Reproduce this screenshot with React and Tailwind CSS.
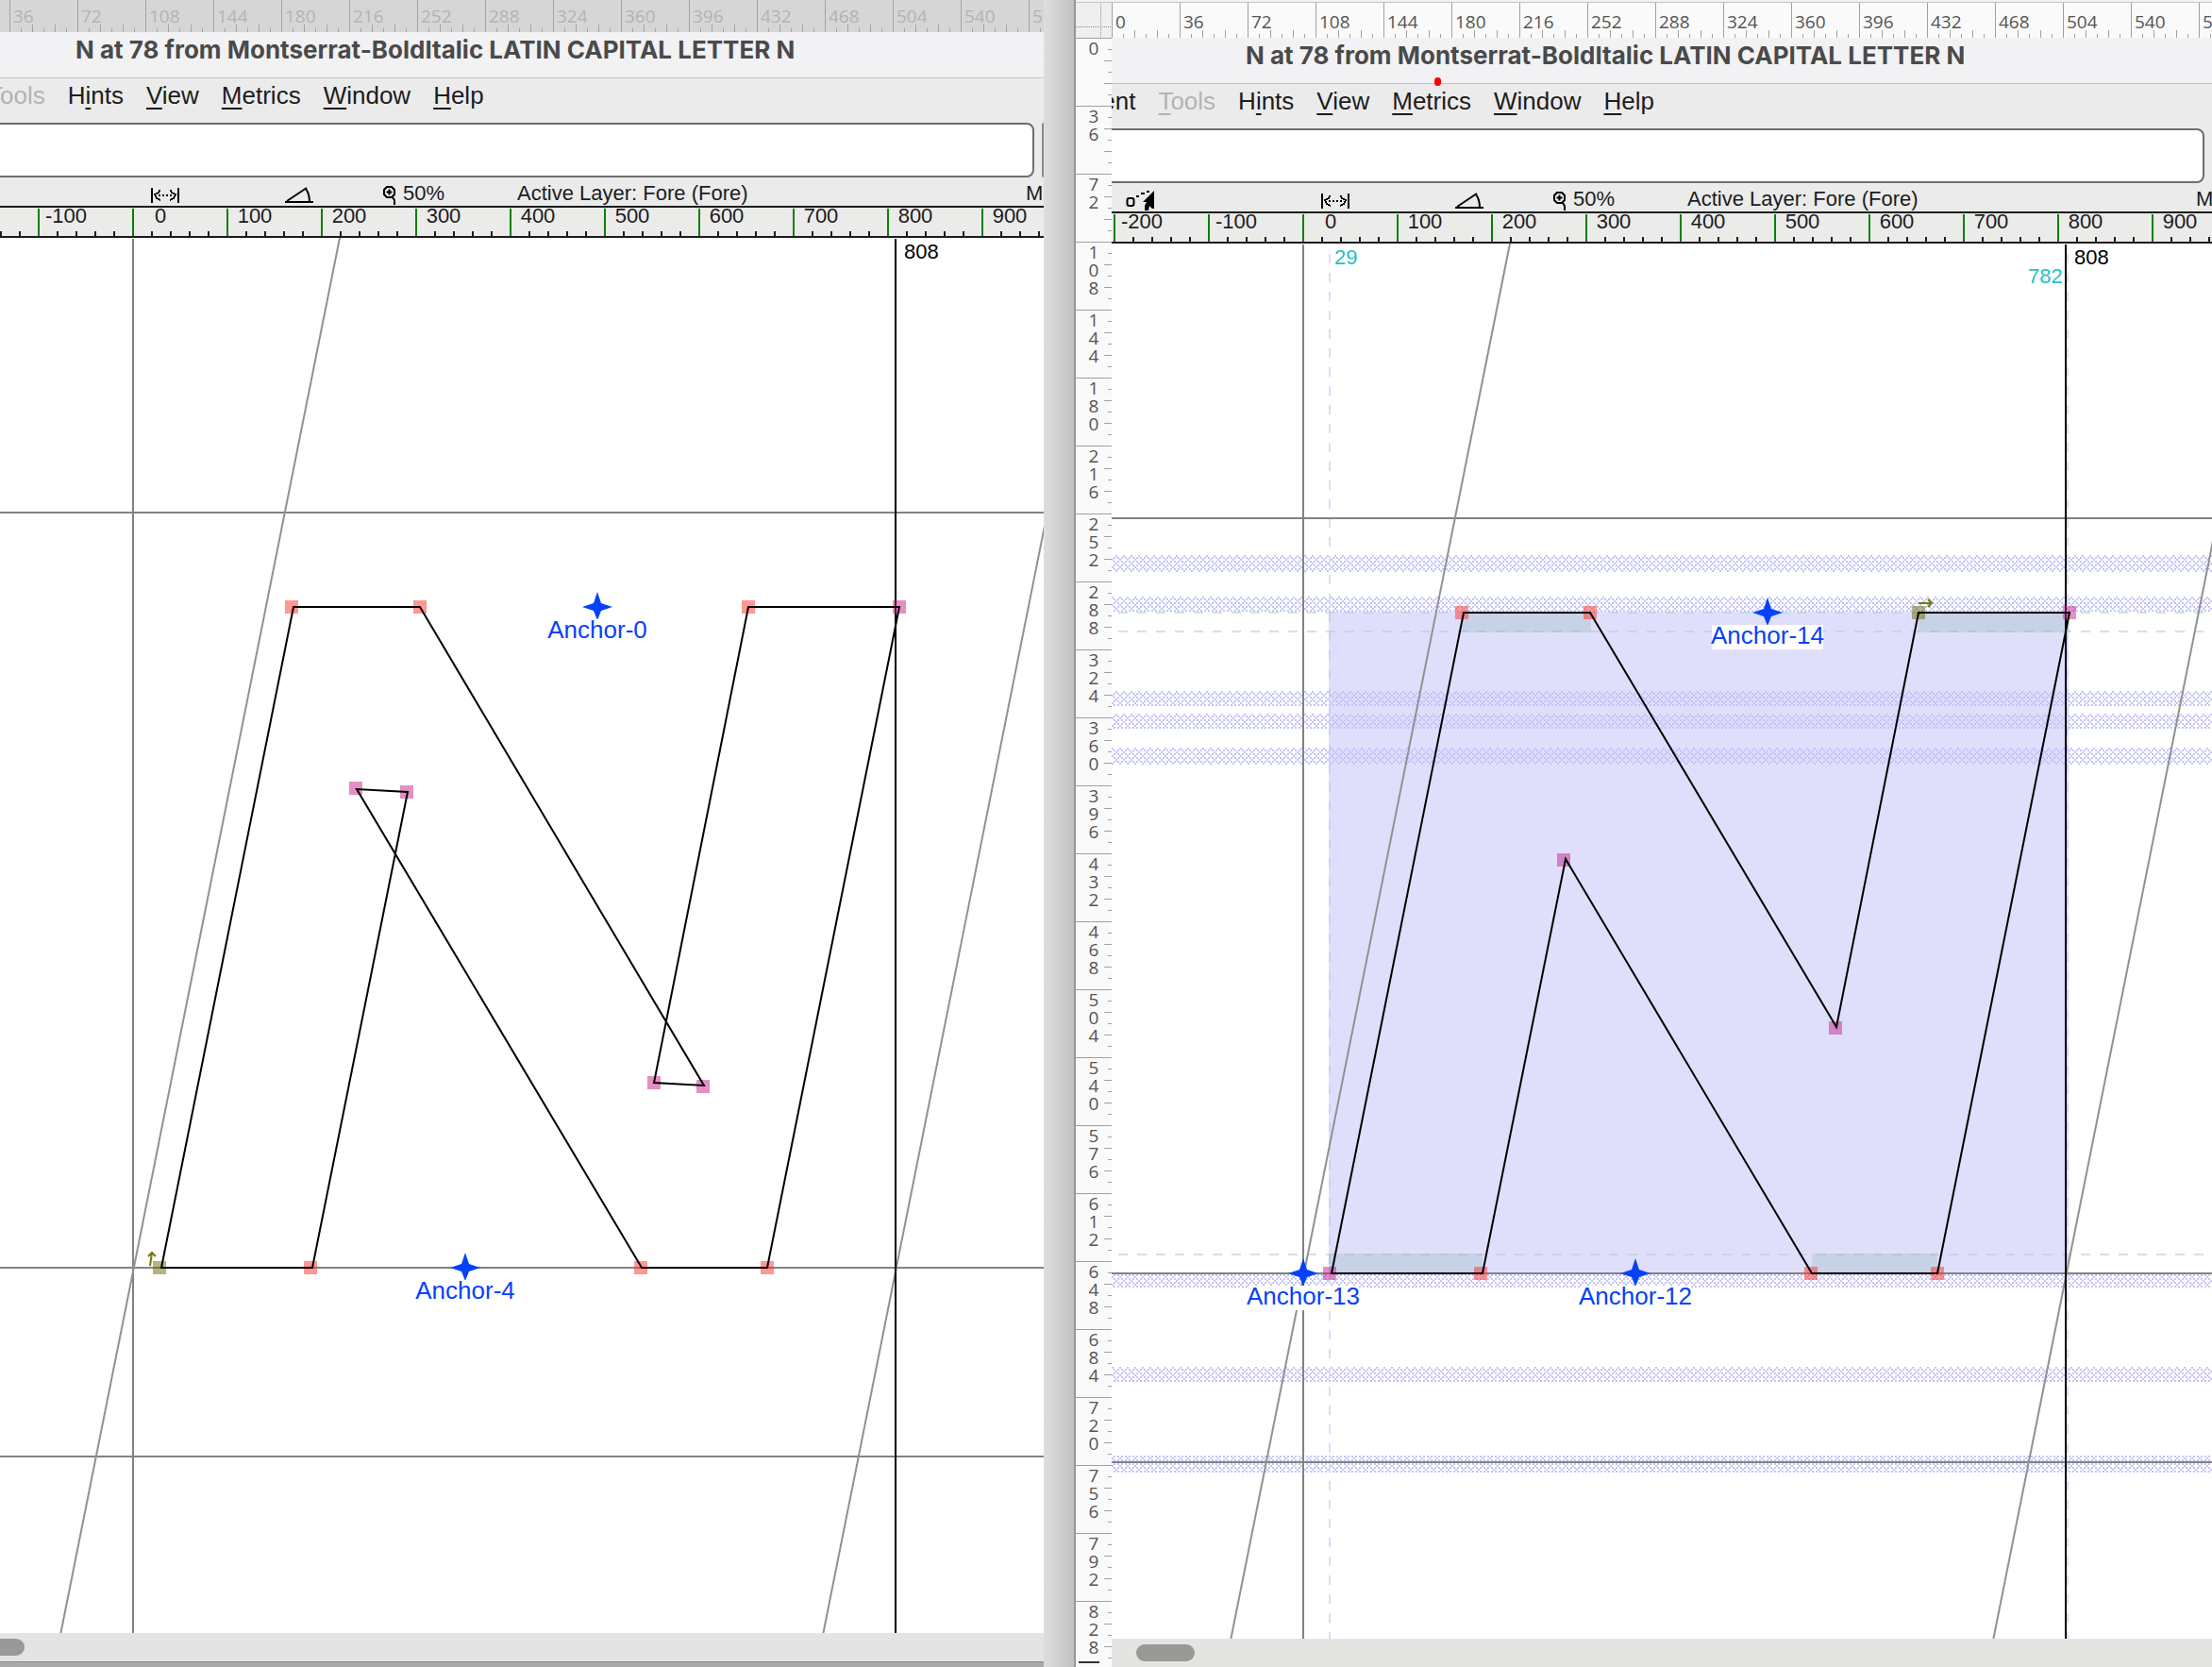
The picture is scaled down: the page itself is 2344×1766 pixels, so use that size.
const POINT_COLORS = {
  corner: 'rgba(255,56,48,0.52)',
  tangent: 'rgba(200,34,140,0.5)',
  first: 'rgba(112,112,12,0.52)',
};

const leftGlyph = {
  contours: ['M233 1091L373 391L507 391L808 898L755 895L855 391L1015 391L875 1091L742 1091L440 584L494 587L393 1091Z'],
  points: [
    [371, 391, 'corner'], [507, 391, 'corner'], [807, 899, 'tangent'], [755, 895, 'tangent'],
    [855, 391, 'corner'], [1015, 391, 'tangent'], [875, 1091, 'corner'], [741, 1091, 'corner'],
    [439, 583, 'tangent'], [493, 587, 'tangent'], [391, 1091, 'corner'], [231, 1091, 'first'],
  ],
  anchors: [[695, 391, 'Anchor-0'], [555, 1091, 'Anchor-4']],
  arrow: 'M221 1089L223 1075M219 1079L223 1075L227 1079',
};

const rightGlyph = {
  contours: ['M233 1091L373 391L507 391L768 830L855 391L1015 391L875 1091L742 1091L481 652L393 1091Z'],
  points: [
    [371, 391, 'corner'], [507, 391, 'corner'], [767, 831, 'tangent'], [855, 391, 'first'],
    [1015, 391, 'tangent'], [875, 1091, 'corner'], [741, 1091, 'corner'], [479, 653, 'tangent'],
    [391, 1091, 'corner'], [231, 1091, 'tangent'],
  ],
  anchors: [[695, 391, 'Anchor-14'], [203, 1091, 'Anchor-13'], [555, 1091, 'Anchor-12']],
  arrow: 'M855 381L869 381M865 377L869 381L865 385',
};

// [y, height] of the blue zones
const blueZones = [[330, 18], [374, 16], [474, 16], [498, 16], [534, 18], [1092, 14], [1190, 16], [1284, 18]];
const stemHints = [
  [371, 390, 137, 22], [855, 390, 160, 22], [230, 1070, 163, 22], [742, 1070, 133, 22],
];

const pointsRuler = [0, 36, 72, 108, 144, 180, 216, 252, 288, 324, 360, 396, 432, 468, 504, 540, 576];
const verticalRuler = [
  '0', '36', '72', '108', '144', '180', '216', '252', '288', '324', '360', '396',
  '432', '468', '504', '540', '576', '612', '648', '684', '720', '756', '792', '828',
];
const unitRuler = [-200, -100, 0, 100, 200, 300, 400, 500, 600, 700, 800, 900];

// label split around the underlined access key
const menus = [
  ['E', 'l', 'ement'],
  ['', 'T', 'ools', true],
  ['H', 'i', 'nts'],
  ['', 'V', 'iew'],
  ['', 'M', 'etrics'],
  ['', 'W', 'indow'],
  ['', 'H', 'elp'],
];

function TopRuler({ className, tick, values }) {
  return (
    <div className={`flex overflow-hidden font-['Open_Sans',sans-serif] text-[19px] ${className}`}>
      {values.map((v, i) => (
        <div key={i} className="relative h-full w-[72px] shrink-0">
          <svg className="absolute bottom-0 left-0 h-full w-full" viewBox="0 0 72 37" preserveAspectRatio="xMinYMax slice" shapeRendering="crispEdges">
            <path d="M0.5 0V37M12.5 33V37M24.5 29V37M36.5 33V37M48.5 29V37M60.5 33V37" stroke={tick} fill="none" />
          </svg>
          <span className="relative pl-1">{v}</span>
        </div>
      ))}
    </div>
  );
}

function VerticalRuler() {
  return (
    <div className="relative flex min-h-0 flex-1 flex-col overflow-hidden bg-[#fafafa] font-['Open_Sans',sans-serif] text-[19px] leading-[19px] text-[#545454]">
      {verticalRuler.map((v) => (
        <div key={v} className="relative h-[72px] shrink-0 border-t border-[#a0a0a0] pt-px text-center">
          {v.split('').map((d, i) => <div key={i}>{d}</div>)}
          <svg className="absolute -top-px right-0" width="8" height="72" shapeRendering="crispEdges">
            <path d="M4 12.5H8M0 24.5H8M4 36.5H8M0 48.5H8M4 60.5H8" stroke="#a0a0a0" fill="none" />
          </svg>
        </div>
      ))}
      <div className="absolute bottom-1 left-[3px] h-0.5 w-[22px] bg-[#333]" />
    </div>
  );
}

function PointerIcon() {
  return (
    <svg width="32" height="24" viewBox="0 0 32 24" fill="none">
      <rect x="1.5" y="9" width="7" height="8" rx="2" stroke="#000" strokeWidth="2" />
      <path d="M11 7h3M16 4h4M22 2h3" stroke="#000" strokeWidth="2" />
      <path d="M30 1L18 13h4l-2 4v5h4l1-5 3 3h2z" fill="#000" />
    </svg>
  );
}

function WidthIcon() {
  return (
    <svg width="32" height="24" viewBox="0 0 32 24" fill="none" stroke="#000" shapeRendering="crispEdges">
      <path d="M1 4v16M29 4v16" strokeWidth="2" />
      <path d="M10 7h-2v2h-2v2h-2v2h2v2h2v2h2M20 7h2v2h2v2h2v2h-2v2h-2v2h-2" strokeWidth="1.5" strokeDasharray="2 1" />
      <path d="M8 12h14" strokeWidth="2" strokeDasharray="2 2" />
    </svg>
  );
}

function AngleIcon() {
  return (
    <svg width="32" height="24" viewBox="0 0 32 24" fill="none" stroke="#000" strokeWidth="2">
      <path d="M0 19h30M2 18L23 4" />
      <path d="M22 5c3 4 4 9 4 14" />
    </svg>
  );
}

function MagnifierIcon() {
  return (
    <svg width="16" height="24" viewBox="0 0 16 24" fill="none" stroke="#000" strokeWidth="2">
      <path d="M5 3h5l3 3v5l-3 3H5l-3-3V6z" />
      <path d="M7.500 5.500v6M4.500 8.500h6" />
      <path d="M11 14l2 3v5" />
    </svg>
  );
}

function UnitRuler({ values }) {
  return (
    <div className="flex h-[34px] shrink-0 overflow-hidden border-y-2 border-[#1c1c1c] bg-[#ebebea] pl-0.5">
      {values.map((v, i) => (
        <div key={i} className="relative h-full w-[100px] shrink-0">
          <svg className="absolute top-0 left-0" width="100" height="30" shapeRendering="crispEdges">
            <path d="M21 25V30M41 25V30M61 25V30M81 25V30" stroke="#1c1c1c" strokeWidth="2" />
            <path d="M1 1V30" stroke="#0a800a" strokeWidth="2" />
          </svg>
          <div className="relative w-[60px] text-center leading-[18px]">{v}</div>
        </div>
      ))}
    </div>
  );
}

function Anchor({ x, y, label, boxWidth }) {
  return (
    <g fill="#0641fa">
      <path d={`M${x} ${y - 16}L${x + 4} ${y - 4}L${x + 16} ${y}L${x + 4} ${y + 4}L${x} ${y + 14}L${x - 4} ${y + 4}L${x - 16} ${y}L${x - 4} ${y - 4}Z`} />
      <rect x={x - boxWidth / 2} y={y + 13} width={boxWidth} height="26" fill="#fff" />
      <text x={x} y={y + 33} textAnchor="middle" className="text-[26px]">{label}</text>
    </g>
  );
}

function GlyphCanvas({ glyph, hinted }) {
  return (
    <svg className="block min-h-0 w-full flex-1 overflow-hidden bg-white">
      <defs>
        <pattern id="stipple" width="8" height="8" patternUnits="userSpaceOnUse">
          <path d="M2 0h2v2h-2zM6 0h2v2h-2zM4 2h2v2h-2zM2 4h2v2h-2zM6 4h2v2h-2zM0 6h2v2h-2z" fill="#c4c4fa" shapeRendering="crispEdges" />
        </pattern>
      </defs>
      {hinted && (
        <g>
          {blueZones.map(([y, h]) => <rect key={y} x="0" y={y} width="100%" height={h} fill="url(#stipple)" />)}
          <path d="M231 11V1478M1013 11V1478" stroke="#dcdcf8" strokeWidth="2" strokeDasharray="10 10" />
          <path d="M7 391H1166M7 411H1166M7 1071H1166" stroke="#cfe6d2" strokeWidth="2" strokeDasharray="10 10" />
          <rect x="230" y="390" width="784" height="700" fill="rgba(191,191,250,0.5)" />
          {stemHints.map(([x, y, w, h]) => <rect key={`${x}-${y}`} x={x} y={y} width={w} height={h} fill="rgba(70,143,106,0.15)" />)}
        </g>
      )}
      <path d="M0 291H1400M0 1091H1400M0 1291H1400M203 1V1478" stroke="#828282" strokeWidth="2" />
      <path d="M422 0L126 1480M1230 0L934 1480" stroke="#919191" strokeWidth="2" />
      <path d="M1011 1V1478" stroke="#000" strokeWidth="2" />
      {glyph.points.map(([x, y, kind]) => (
        <rect key={`${x}-${y}`} x={x - 7} y={y - 7} width="14" height="14" fill={POINT_COLORS[kind]} />
      ))}
      {glyph.contours.map((d) => <path key={d} d={d} fill="none" stroke="#000" strokeWidth="2" />)}
      <path d={glyph.arrow} fill="none" stroke="#77770a" strokeWidth="2" />
      {glyph.anchors.map(([x, y, label]) => (
        <Anchor key={label} x={x} y={y} label={label} boxWidth={label.length > 8 ? 118 : 104} />
      ))}
      <text x="1020" y="22" className="text-[22px]">808</text>
      {hinted && (
        <g fill="#1fc3c3" className="text-[22px]">
          <text x="236" y="22">29</text>
          <text x="971" y="42">782</text>
        </g>
      )}
    </svg>
  );
}

function GlyphWindow({ id, glyph, hinted, menuItems, menuPadding, unitLabels, nextField }) {
  return (
    <div className="flex min-h-0 flex-1 flex-col bg-[#ebebeb] font-['Liberation_Sans',Arial,sans-serif] text-[22px] text-[#1c1c1c]">
      <h1 className="h-12 shrink-0 overflow-hidden bg-[#f2f2f4] pl-[142px] font-['Inter',sans-serif] text-[26px] leading-[38px] font-bold whitespace-nowrap text-[#4a4a4a]">
        N at 78 from Montserrat-BoldItalic LATIN CAPITAL LETTER N
      </h1>
      <nav className={`flex h-12 shrink-0 gap-6 border-t border-[#c2c2c4] text-[26px] leading-[36px] ${menuPadding}`}>
        {menuItems.map(([before, key, after, disabled]) => (
          <button key={before + key + after} type="button" disabled={disabled} className="h-9 shrink-0 disabled:text-[#b3b3b3]">
            {before}
            <span className="underline decoration-2 underline-offset-4">{key}</span>
            {after}
          </button>
        ))}
      </nav>
      <div className="flex h-[58px] shrink-0 gap-2 overflow-hidden">
        <input id={id} aria-label="Glyph name" className="-ml-3 h-full min-w-0 flex-1 rounded-lg border-2 border-[#6e6e6e] bg-white px-3 outline-none" />
        <div className={nextField ? 'h-full w-0.5 rounded-l-md bg-[#8a8a8a]' : 'h-full w-0'} />
      </div>
      <div className="flex h-[30px] shrink-0 overflow-hidden pt-[3px] pl-[15px] leading-[28px] whitespace-nowrap">
        <div className="w-[207px] shrink-0 pt-1">{hinted && <PointerIcon />}</div>
        <div className="w-[142px] shrink-0 pt-1"><WidthIcon /></div>
        <div className="w-[103px] shrink-0 pt-1"><AngleIcon /></div>
        <div className="flex w-[143px] shrink-0 gap-1.5">
          <div className="pt-1"><MagnifierIcon /></div>
          50%
        </div>
        <div className="w-[539px] shrink-0">Active Layer: Fore (Fore)</div>
        <div>M</div>
      </div>
      <UnitRuler values={unitLabels} />
      <GlyphCanvas glyph={glyph} hinted={hinted} />
      <div className="h-[30px] shrink-0 bg-[#e4e4e2] pt-1.5 pl-[26px]">
        <div className="h-[18px] w-[62px] rounded-full bg-[#999997]" />
      </div>
    </div>
  );
}

export default function App() {
  return (
    <main className="grid h-screen grid-cols-[1106fr_34px_1204fr] overflow-hidden bg-white">
      <section className="flex min-w-0 flex-col overflow-hidden">
        <TopRuler className="-ml-[62px] h-[34px] shrink-0 bg-[#d6d6d6] leading-[35px] text-[#b3b3b3]" tick="#a3a3a3" values={['', ...pointsRuler.slice(1)]} />
        <div className="-ml-[62px] flex min-h-0 flex-1 flex-col">
          <GlyphWindow
            id="glyph-left"
            glyph={leftGlyph}
            menuItems={menus.slice(1)}
            menuPadding="pl-[49px]"
            unitLabels={['', ...unitRuler.slice(1)]}
            nextField
          />
        </div>
        <div className="h-1.5 shrink-0 border-t border-[#8c8c8c] bg-[#a9a9a9]" />
      </section>

      <div className="border-r-2 border-[#959595] bg-linear-to-r from-[#dedede] to-[#c2c2c2]" />

      <section className="flex min-w-0 overflow-hidden">
        <div className="flex w-[38px] shrink-0 flex-col">
          <div className="h-10 shrink-0 border-t-2 border-[#f2f2f2] bg-[#efefef]">
            <svg width="38" height="38" shapeRendering="crispEdges">
              <path d="M0 0.5H38" stroke="#c4c4c4" />
              <path d="M26.5 2V38M0 26.5H38" stroke="#8a8a8a" strokeDasharray="1 1" />
            </svg>
          </div>
          <VerticalRuler />
        </div>
        <div className="relative flex min-w-0 flex-1 flex-col overflow-hidden">
          <div className="h-[3px] shrink-0 border-b border-[#c4c4c4] bg-[#f2f2f2]" />
          <TopRuler className="h-[37px] shrink-0 bg-[#fafafa] leading-[41px] text-[#545454]" tick="#a0a0a0" values={pointsRuler} />
          <GlyphWindow
            id="glyph-right"
            glyph={rightGlyph}
            hinted
            menuItems={menus}
            menuPadding="-ml-[70px]"
            unitLabels={unitRuler}
          />
          <div className="absolute top-[82px] left-[342px] h-[9px] w-[7px] rounded-full bg-[#fb0007]" />
        </div>
      </section>
    </main>
  );
}
